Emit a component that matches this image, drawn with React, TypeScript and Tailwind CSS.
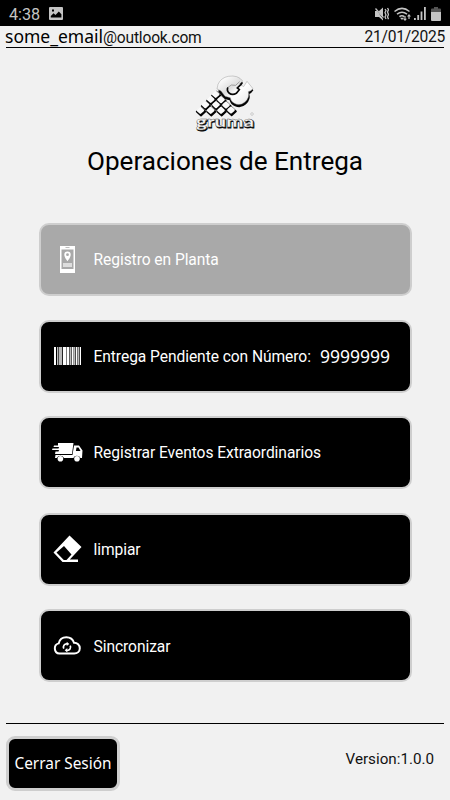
import type { ReactNode } from "react";

const DIAMONDS = [
  [64, 136],
  [95, 136],
  [126, 136],
  [156, 135],
  [79, 119],
  [111, 119],
  [141, 120],
  [95, 103],
  [126, 104],
  [110, 88],
];

function GrumaLogo() {
  return (
    <svg viewBox="42 24 192 183" className="h-[61px] w-[64px]" aria-label="gruma">
      <defs>
        <linearGradient id="silver" x1="0" y1="0" x2="1" y2="1">
          <stop offset="0.1" stopColor="#ffffff" />
          <stop offset="0.4" stopColor="#dedede" />
          <stop offset="0.55" stopColor="#ffffff" />
          <stop offset="1" stopColor="#e4e4e4" />
        </linearGradient>
      </defs>
      <path
        d="M121 60Q128 41 150 37Q179 32 192 51L186 60 194 67 205 51 223 73Q218 81 211 84Q216 101 201 115Q186 129 168 121Q155 116 152 103L136 99 124 84 118 77Z"
        fill="#050505"
        transform="translate(0 3)"
      />
      {DIAMONDS.map(([x, y]) => (
        <path key={`s${x}-${y}`} transform={`translate(${x + 2} ${y + 4})`} d="M-13 0 0-12 13 0 0 12Z" fill="#050505" stroke="#050505" strokeWidth="5" strokeLinejoin="round" />
      ))}
      {DIAMONDS.map(([x, y]) => (
        <path key={`${x}-${y}`} transform={`translate(${x} ${y})`} d="M-8 0 0-7 8 0 0 7Z" fill="#fafafa" stroke="#fafafa" strokeWidth="7" strokeLinejoin="round" />
      ))}
      <path
        d="M117 58Q126 38 148 34Q177 29 191 48L182 57 194 65 204 49 222 71Q216 78 208 80Q213 96 198 111Q182 124 166 115Q155 109 154 98L138 94 126 78 114 72Z"
        fill="url(#silver)"
        stroke="#888"
        strokeWidth="1.2"
      />
      <path d="M147 67Q142 75 150 84Q160 92 172 85L181 74 175 69 186 58" fill="none" stroke="#080808" strokeWidth="5" />
      <path d="M147 67Q156 56 170 61L182 50" fill="none" stroke="#777" strokeWidth="2" />
      <g fontFamily="Lato, sans-serif" fontWeight="900" fontSize="46">
        <text x="53" y="190" textLength="174" lengthAdjust="spacingAndGlyphs" fill="#050505" stroke="#050505" strokeWidth="2.5">
          gruma
        </text>
        <text x="51" y="187" textLength="174" lengthAdjust="spacingAndGlyphs" fill="#f5f5f5" stroke="#555" strokeWidth="1" aria-hidden="true">
          gruma
        </text>
      </g>
      <circle cx="219" cy="147" r="4" fill="none" stroke="#aaa" strokeWidth="1.5" />
    </svg>
  );
}

function PhoneIcon() {
  return (
    <svg viewBox="0 0 15 27" className="h-[27px] w-[15px]">
      <path fill="#fff" d="M0 0h15v27H0z" />
      <path fill="#a9a9a9" d="M1.5 3.5h12v19.5h-12zM5.5 1.2h4v.8h-4z" />
      <path fill="#fff" fillRule="evenodd" d="M7.5 5.5a3.2 3.2 0 0 0-3.2 3.2c0 2.5 3.2 6.5 3.2 6.5s3.2-4 3.2-6.5a3.2 3.2 0 0 0-3.2-3.2m0 1.8a1.4 1.4 0 1 1 0 2.8 1.4 1.4 0 0 1 0-2.8" />
      <path fill="#ddd" d="M3 17h9v4H3z" />
    </svg>
  );
}

function BarcodeIcon() {
  return (
    <svg viewBox="0 0 27 18" className="h-[18px] w-[27px]">
      <path fill="#fff" d="M0 0h2v18H0zM9 0h3.5v18H9zM13 0h2v18h-2zM18 0h1.6v18H18zM22 0h1.2v18H22zM26 0h1v18h-1z" />
      <path fill="#bbb" d="M3 0h1v18H3zM4.6 0h3.6v18H4.6zM15.5 0h2v18h-2zM20 0h1.4v18H20zM23.5 0h1.9v18h-1.9z" />
    </svg>
  );
}

function TruckIcon() {
  return (
    <svg viewBox="0 0 31 19" className="h-[19px] w-[31px]">
      <path fill="#fff" d="M6 0h15.5L20 11H3l.5-2.5h3L7 7H0l.5-1.5h6L7 4H1.5L2 2.5h4zM22 2.5h5l3.5 5L30 15h-1.5a4 4 0 0 0-7.2 0H12a4 4 0 0 0-7.2 0H3l.5-3h17z" />
      <path d="M24.5 4.5h2l2 3.5h-4.6z" fill="#000" />
      <circle cx="8.4" cy="15.7" r="2.8" fill="#fff" />
      <circle cx="25" cy="15.7" r="2.8" fill="#fff" />
    </svg>
  );
}

function EraserIcon() {
  return (
    <svg viewBox="0 0 29 28" className="h-[28px] w-[29px]">
      <path fill="#fff" fillRule="evenodd" d="M16.5.5 28.5 12 16.8 24.5H25V27H9.5L.5 17.5ZM11 11 3.5 17.5 10.8 25h2.7l5-5.6z" />
    </svg>
  );
}

function CloudSyncIcon() {
  return (
    <svg viewBox="0 0 28 19" className="h-[19px] w-[28px]" fill="none" stroke="#fff">
      <path strokeWidth="2" d="M6.5 17.6A5.2 5.2 0 0 1 5.7 7.4C6.5 3.6 9.6 1.2 13.4 1.2c3.5 0 6.5 2 7.6 5.5 3.3-.1 5.8 2.4 5.8 5.5s-2.4 5.4-5.6 5.4z" />
      <path strokeWidth="1.7" d="M10.8 12.6a3.2 3.2 0 0 1 3.2-4.7M17.2 9.6a3.2 3.2 0 0 1-3.2 4.7" />
      <path fill="#fff" stroke="none" d="m13.7 5.8 2.6 2.1-2.6 2.2zM14.3 12.1v4.3l-2.6-2.2z" />
    </svg>
  );
}

function StatusBar() {
  return (
    <div className="flex h-[26px] items-center justify-between bg-black pl-[9px] pr-[9px] text-[#c4c4c4]">
      <div className="flex items-center gap-[9px]">
        <span className="pt-[4px] text-[16.2px] leading-none">4:38</span>
        <svg viewBox="0 0 14 13" className="mt-px h-[13px] w-[14px]">
          <path fill="currentColor" fillRule="evenodd" d="M1 0h12q1 0 1 1v11q0 1-1 1H1q-1 0-1-1V1q0-1 1-1m.8 10.5h10.6V7.2L9.8 4.5 6.5 8 4.6 6.3 1.8 9zM3 2.5v2h2v-2z" />
        </svg>
      </div>
      <div className="flex items-center gap-[5px] pt-px">
        <svg viewBox="0 0 14 14" className="h-[14px] w-[14px]">
          <path fill="currentColor" d="M0 4h4l4-3.5v13L4 10H0z" />
          <path fill="none" stroke="#000" d="M.5 1 9 12.5" />
          <path fill="none" stroke="currentColor" strokeWidth="1.3" d="m.5 1.5 8 9M10 2l1 1.5-1 2L11 8l-1 2 1 2M12.5 1l1 1.8-1 2.2 1 2.5-1 2.2 1 2.5" />
        </svg>
        <svg viewBox="0 0 17 14" className="h-[14px] w-[17px]">
          <path fill="none" stroke="currentColor" strokeWidth="1.5" d="M.5 4.5Q8-1.7 15.5 4.5M3 7.2q5-4 10 0M5.4 9.7q2.5-2 5 0" />
          <path fill="currentColor" d="m8 13-2-2.2h4zM11 14l-2-2.2h1.4V9h1.2v2.8H13zM15 7l2 2.5h-1.4V12h-1.2V9.5H13z" />
        </svg>
        <svg viewBox="0 0 12 13" className="-ml-0.5 h-[13px] w-[12px]">
          <path fill="currentColor" d="M0 11h1.8v2H0zM3.3 8h1.8v5H3.3zM6.6 4.5h1.8V13H6.6zM10 0h1.8v13H10z" />
        </svg>
        <svg viewBox="0 0 10 14" className="h-[14px] w-[10px]">
          <path fill="#555" d="M3 0h4v1.5h2q1 0 1 1V5H0V2.5q0-1 1-1h2z" />
          <path fill="currentColor" d="M0 5h10v8q0 1-1 1H1q-1 0-1-1z" />
        </svg>
      </div>
    </div>
  );
}

function MenuButton({ icon, label, value, disabled }: { icon: ReactNode; label: string; value?: string; disabled?: boolean }) {
  return (
    <button
      disabled={disabled}
      className={`flex h-[73px] w-[373px] items-center rounded-[10px] border-2 border-[#cecece] pl-[11px] text-left text-white ${
        disabled ? "bg-[#a9a9a9]" : "bg-black"
      }`}
    >
      <span className="flex w-[31px] shrink-0 justify-center">{icon}</span>
      <span className="ml-[11px] pt-[3px] whitespace-nowrap text-[15.6px] leading-none tracking-[-0.07px]">{label}</span>
      {value && <span className="ml-[9px] pt-[2px] font-['Noto_Sans'] text-[17.5px] leading-none">{value}</span>}
    </button>
  );
}

export default function App() {
  return (
    <div className="flex h-[800px] w-[450px] flex-col overflow-hidden bg-[#f1f1f1] font-[Roboto,sans-serif] text-black">
      <StatusBar />
      <header className="mx-1.5 flex h-[22px] items-center justify-between border-b border-black leading-none">
        <div className="-ml-[1px] flex items-baseline pt-[2px]">
          <span className="font-['Noto_Sans'] text-[17.5px]">some_email</span>
          <span className="text-[15.6px] tracking-[-0.2px] text-[#111]">@outlook.com</span>
        </div>
        <span className="-mr-px pt-[2px] text-[15.6px] tracking-[-0.25px] text-[#111]">21/01/2025</span>
      </header>

      <main className="flex flex-col items-center">
        <div className="mt-[25px]">
          <GrumaLogo />
        </div>
        <h1 className="mt-[13px] text-[26.1px] leading-[28px]">Operaciones de Entrega</h1>
        <div className="mt-[48px] flex flex-col gap-[23.6px]">
          <MenuButton icon={<PhoneIcon />} label="Registro en Planta" disabled />
          <MenuButton icon={<BarcodeIcon />} label="Entrega Pendiente con Número:" value="9999999" />
          <MenuButton icon={<TruckIcon />} label="Registrar Eventos Extraordinarios" />
          <MenuButton icon={<EraserIcon />} label="limpiar" />
          <MenuButton icon={<CloudSyncIcon />} label="Sincronizar" />
        </div>
      </main>

      <footer className="mx-1.5 mt-auto flex h-[77px] items-start justify-between border-t border-black pt-3">
        <button className="h-[55px] w-[114px] rounded-[9px] border-[3px] border-[#cecece] bg-black pt-px font-['Noto_Sans'] text-[15.4px] whitespace-nowrap text-white">
          Cerrar Sesión
        </button>
        <span className="mr-2.5 mt-[16px] text-[15.2px] leading-none text-[#111]">Version:1.0.0</span>
      </footer>
    </div>
  );
}
